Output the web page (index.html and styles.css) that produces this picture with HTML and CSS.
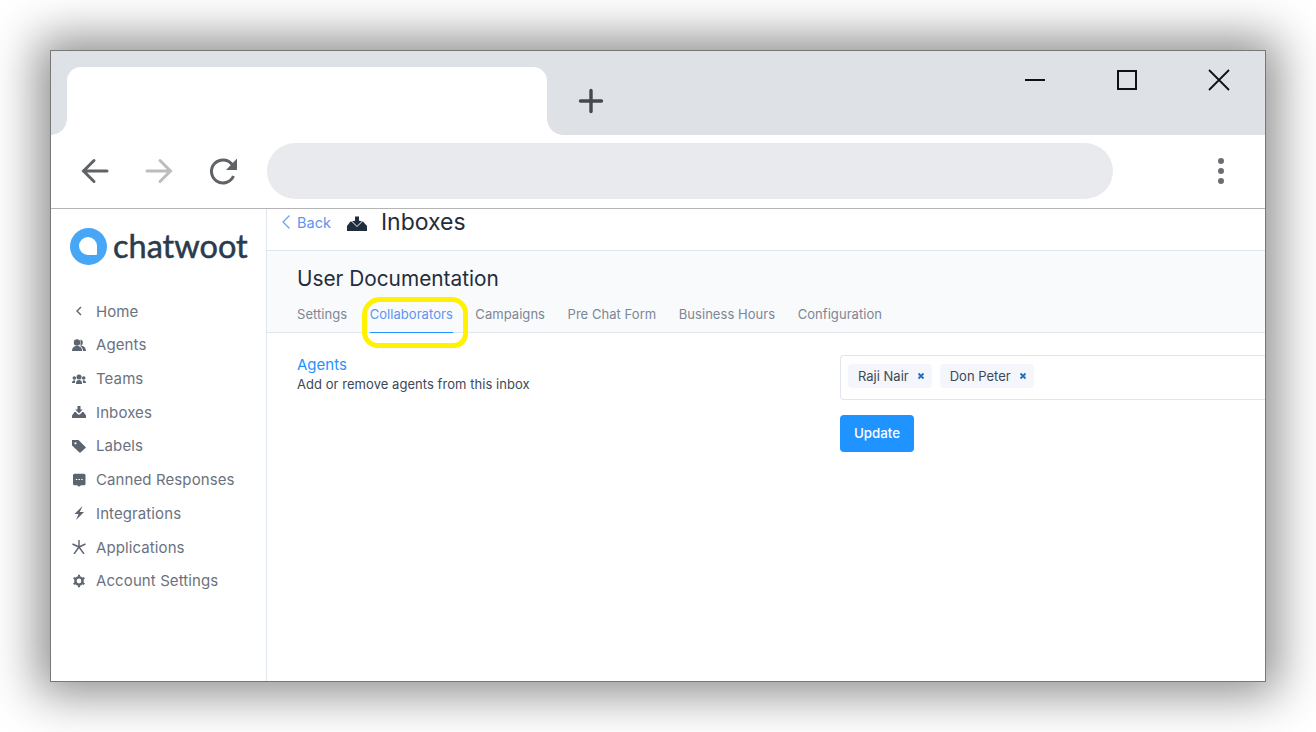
FILE: index.html

```html
<!DOCTYPE html>
<html lang="en">
<head>
  <meta charset="UTF-8">
  <title>Chatwoot - Inboxes</title>
  <link rel="stylesheet" href="styles.css">
</head>
<body>
  <div class="window">
    <div class="tabstrip">
      <div class="tab"></div>
      <svg class="newtab" width="26" height="26" viewBox="0 0 26 26"><path d="M13 2.500v21M2.500 13h21" stroke="#45494e" stroke-width="3.400" stroke-linecap="round" fill="none"/></svg>
      <div class="winbtns">
        <svg width="22" height="22" viewBox="0 0 22 22"><path d="M1 11h20" stroke="#111" stroke-width="2" fill="none"/></svg>
        <svg width="22" height="22" viewBox="0 0 22 22"><rect x="2" y="2" width="18" height="18" stroke="#111" stroke-width="2" fill="none"/></svg>
        <svg width="22" height="22" viewBox="0 0 22 22"><path d="M1 1l20 20M21 1L1 21" stroke="#111" stroke-width="1.800" fill="none"/></svg>
      </div>
    </div>
    <div class="toolbar">
      <svg class="navicon" width="30" height="30" viewBox="0 0 30 30"><path d="M27 15H4M14 4.500L3.500 15 14 25.500" stroke="#5f6368" stroke-width="3" fill="none" stroke-linecap="round"/></svg>
      <svg class="navicon" width="30" height="30" viewBox="0 0 30 30"><path d="M3 15h23M16 4.500L26.500 15 16 25.500" stroke="#bdbdbd" stroke-width="3" fill="none" stroke-linecap="round"/></svg>
      <svg class="navicon" width="30" height="30" viewBox="0 0 30 30"><path d="M25.500 20a11.500 11.500 0 1 1-1-11" stroke="#5f6368" stroke-width="3" fill="none"/><path d="M29 2.500V14H18z" fill="#5f6368"/></svg>
      <div class="urlbar"></div>
      <div class="menu-dots"><span></span><span></span><span></span></div>
    </div>
    <div class="app">
      <aside class="sidebar">
        <div class="logo">
          <svg width="37" height="37" viewBox="0 0 37 37"><circle cx="18.500" cy="18.500" r="18.500" fill="#47a7f6"/><path d="M18 9a9 9 0 1 0 0 18h8a1 1 0 0 0 1-1v-8a9 9 0 0 0-9-9z" fill="#fff"/></svg>
          <span class="logo-text">chatwoot</span>
        </div>
        <ul class="nav">
          <li><svg viewBox="0 0 14 14"><path d="M9 3L5 7l4 4" stroke="#5c6470" stroke-width="1.400" fill="none"/></svg>Home</li>
          <li><svg viewBox="0 0 14 14"><circle cx="5" cy="4.500" r="3.200" fill="#5c6470"/><path d="M0 13c0-3.500 2-5 5-5s5 1.500 5 5z" fill="#5c6470"/><path d="M8.500 1.400a3.200 3.200 0 0 1 0 6.200c3 .4 5.500 2 5.500 5.400h-3c0-2-1-3.700-2.500-4.800z" fill="#5c6470"/></svg>Agents</li>
          <li><svg viewBox="0 0 14 14"><circle cx="7" cy="5" r="2.500" fill="#5c6470"/><circle cx="2.300" cy="6" r="1.800" fill="#5c6470"/><circle cx="11.700" cy="6" r="1.800" fill="#5c6470"/><path d="M4 12c0-3 1-4 3-4s3 1 3 4zM0 11c0-2 1-2.800 2.500-2.800l.7.300C3 9.500 3 10.500 3 11zM14 11c0-2-1-2.800-2.500-2.800l-.7.300c.2 1 .2 2 .2 2.500z" fill="#5c6470"/></svg>Teams</li>
          <li><svg viewBox="0 0 14 14"><path d="M2.500 7h1.300L6 9.500h2L10.200 7h1.300L14 10.500V13H0v-2.500z" fill="#5c6470"/><path d="M5.500 1h3v3.500h2.300L7 8.300 3.200 4.500h2.300z" fill="#5c6470"/></svg>Inboxes</li>
          <li><svg viewBox="0 0 14 14"><path d="M0 1h6.500L14 8.500 8 14 0 6.500z" fill="#5c6470"/><circle cx="3.500" cy="4.300" r="1.100" fill="#fff"/></svg>Labels</li>
          <li><svg viewBox="0 0 14 14"><path d="M2.500 .8h9.500A1.500 1.500 0 0 1 13.500 2.300v8.400A1.500 1.500 0 0 1 12 12.200H9l-2 1.500-2-1.500H2.500A1.500 1.500 0 0 1 1 10.700V2.300A1.500 1.500 0 0 1 2.500 .8z" fill="#5c6470"/><path d="M3.800 6.500h1.500M6.500 6.500H8M9.200 6.500h1.500" stroke="#fff" stroke-width="1.200"/></svg>Canned Responses</li>
          <li><svg viewBox="0 0 14 14"><path d="M10.500 0L2.500 8h4L4 14l8-8H7.800z" fill="#5c6470"/></svg>Integrations</li>
          <li><svg viewBox="0 0 14 14"><path d="M7 7V0M7 7L.5 4M7 7l6.500-3M7 7l-5 7M7 7l5 7" stroke="#5c6470" stroke-width="1.400" fill="none"/></svg>Applications</li>
          <li><svg viewBox="0 0 14 14"><circle cx="7" cy="7" r="3.600" fill="none" stroke="#5c6470" stroke-width="2.400"/><path d="M7 .8v2M7 11.200v2M1.600 3.900l1.700 1M10.700 9.100l1.700 1M1.600 10.100l1.700-1M10.700 4.900l1.700-1" stroke="#5c6470" stroke-width="2"/></svg>Account Settings</li>
        </ul>
      </aside>
      <main class="content">
        <header class="topbar">
          <a class="back"><svg width="10" height="16" viewBox="0 0 10 16"><path d="M8.500 1.500L2 8l6.500 6.500" stroke="#6a9cf2" stroke-width="1.200" fill="none"/></svg>Back</a>
          <svg class="title-icon" width="20" height="15" viewBox="0 0 20 15"><path d="M3.500 5.500H16L20 10v5H0v-5z" fill="#1f2d3d"/><path d="M7.500 0h5v4.500h3.500L10 10.500 4 4.500h3.500z" fill="#1f2d3d" stroke="#fff" stroke-width="1"/></svg>
          <h1>Inboxes</h1>
        </header>
        <section class="inbox-head">
          <h2>User Documentation</h2>
          <div class="tabs">
            <span class="tab-link">Settings</span>
            <span class="tab-link active">Collaborators<i class="highlight"></i></span>
            <span class="tab-link">Campaigns</span>
            <span class="tab-link">Pre Chat Form</span>
            <span class="tab-link">Business Hours</span>
            <span class="tab-link">Configuration</span>
          </div>
        </section>
        <section class="settings-row">
          <div class="settings-info">
            <div class="settings-title">Agents</div>
            <p>Add or remove agents from this inbox</p>
          </div>
          <div class="settings-form">
            <div class="multiselect">
              <span class="chip">Raji Nair<svg width="8" height="8" viewBox="0 0 8 8"><path d="M1.500 1.500l5 5M6.500 1.500l-5 5" stroke="#1f6fbf" stroke-width="1.800"/></svg></span>
              <span class="chip">Don Peter<svg width="8" height="8" viewBox="0 0 8 8"><path d="M1.500 1.500l5 5M6.500 1.500l-5 5" stroke="#1f6fbf" stroke-width="1.800"/></svg></span>
            </div>
            <button class="update-btn">Update</button>
          </div>
        </section>
      </main>
    </div>
  </div>
</body>
</html>
```

FILE: styles.css

```css
* {
  box-sizing: border-box;
}

html, body {
  margin: 0;
  height: 732px;
  overflow: hidden;
  background: #fff;
}

body {
  padding: 50px 50px 0;
  font-family: "Inter", "Liberation Sans", sans-serif;
}

/* Browser window */
.window {
  width: 1216px;
  height: 632px;
  border: 1px solid #777;
  background: #fff;
  box-shadow: 0 0 45px 12px rgba(0, 0, 0, 0.45);
  display: flex;
  flex-direction: column;
  overflow: hidden;
}

.tabstrip {
  height: 84px;
  background: #dee1e6;
  display: flex;
  padding: 16px 0 0 16px;
  flex: none;
}

.tab {
  width: 480px;
  height: 68px;
  background: #fff;
  border-radius: 14px 14px 0 0;
  position: relative;
}

.tab::before, .tab::after {
  content: "";
  position: absolute;
  bottom: 0;
  width: 16px;
  height: 16px;
  background: #fff;
}

.tab::before {
  left: -16px;
  -webkit-mask: radial-gradient(circle at 0 0, transparent 15.500px, #000 16px);
}

.tab::after {
  right: -16px;
  -webkit-mask: radial-gradient(circle at 100% 0, transparent 15.500px, #000 16px);
}

.newtab {
  margin: 21px 0 0 31px;
}

.winbtns {
  margin-left: auto;
  display: flex;
  gap: 70px;
  padding: 2px 35px 0 0;
}

.toolbar {
  height: 74px;
  flex: none;
  display: flex;
  align-items: center;
  padding: 0 0 2px 29px;
  gap: 34px;
  border-bottom: 1px solid #b4b4b4;
}

.navicon {
  flex: none;
}

.urlbar {
  width: 846px;
  height: 56px;
  border-radius: 28px;
  background: #e8eaed;
  margin-left: -5px;
  flex: none;
}

.menu-dots {
  display: flex;
  flex-direction: column;
  gap: 4px;
  margin-left: 71px;
}

.menu-dots span {
  width: 6px;
  height: 6px;
  border-radius: 50%;
  background: #6a6d72;
}

/* App */
.app {
  flex: 1;
  display: flex;
  min-height: 0;
}

.sidebar {
  width: 216px;
  flex: none;
  border-right: 1px solid #e0e6ed;
  padding: 19px 0 0 19px;
}

.logo {
  display: flex;
  align-items: center;
  gap: 6px;
}

.logo-text {
  font-family: "Lato", sans-serif;
  font-size: 32.500px;
  font-weight: 400;
  -webkit-text-stroke: 0.5px #2a3b4e;
  color: #2a3b4e;
  line-height: 35px;
  padding-bottom: 2px;
}

.nav {
  list-style: none;
  margin: 29.400px 0 0 2px;
  padding: 0;
}

.nav li {
  height: 33.700px;
  display: flex;
  align-items: center;
  gap: 9px;
  font-size: 15px;
  letter-spacing: 0.1px;
  color: #6a7280;
}

.nav svg {
  width: 14px;
  height: 14px;
  flex: none;
  margin-right: 1px;
}

.content {
  flex: 1;
  min-width: 0;
}

.topbar {
  height: 42px;
  border-bottom: 1px solid #e0e6ed;
  display: flex;
  align-items: flex-start;
  padding-left: 14px;
}

.back {
  display: flex;
  align-items: center;
  gap: 6px;
  font-size: 14.500px;
  color: #5e94f0;
  height: 26px;
}

.title-icon {
  margin: 7px 0 0 16px;
}

.topbar h1 {
  margin: 0 0 0 14px;
  font-size: 23px;
  font-weight: 400;
  color: #1f2d3d;
  line-height: 27px;
}

.inbox-head {
  background: #f9fafc;
  border-bottom: 1px solid #e0e6ed;
  height: 82px;
  padding: 14px 0 0 30px;
}

.inbox-head h2 {
  margin: 0;
  font-size: 20.800px;
  font-weight: 400;
  color: #1f2d3d;
  line-height: 28px;
}

.tabs {
  display: flex;
  gap: 22.500px;
  margin-top: 13px;
}

.tab-link {
  position: relative;
  font-size: 13px;
  letter-spacing: 0.05px;
  color: #7b8794;
  line-height: 16px;
  height: 27px;
}

.tab-link.active {
  color: #5e94f0;
  border-bottom: 1px solid #1f93ff;
}

/* Yellow annotation round the active tab */
.highlight {
  position: absolute;
  left: -8px;
  right: -15.500px;
  top: -9px;
  height: 51px;
  border: 5px solid #fff200;
  border-radius: 18px 16px 14px 16px;
}

.settings-row {
  display: flex;
  padding: 23px 0 0 30px;
}

.settings-info {
  width: 543px;
  flex: none;
}

.settings-title {
  font-size: 15px;
  color: #1f93ff;
  line-height: 18px;
}

.settings-info p {
  margin: 2px 0 0;
  font-size: 13px;
  letter-spacing: 0.05px;
  color: #3c4858;
  line-height: 16px;
}

.settings-form {
  flex: 1;
  margin-top: -1px;
}

.multiselect {
  height: 45px;
  width: 480px;
  border: 1px solid #e0e6ed;
  border-right: 0;
  border-radius: 4px 0 0 4px;
  display: flex;
  align-items: flex-start;
  gap: 8px;
  padding: 8px 7px 0;
}

.chip {
  height: 24px;
  background: #f4f6fb;
  border-radius: 4px;
  display: flex;
  align-items: center;
  gap: 8px;
  padding: 0 7px 1px 10px;
  font-size: 13px;
  color: #3c4858;
}

.update-btn {
  display: block;
  margin-top: 15px;
  width: 74px;
  height: 37px;
  padding: 0 0 2px;
  background: #1f93ff;
  color: #fff;
  border: 0;
  border-radius: 4px;
  font-family: inherit;
  font-size: 13.300px;
  font-weight: 500;
}
```
